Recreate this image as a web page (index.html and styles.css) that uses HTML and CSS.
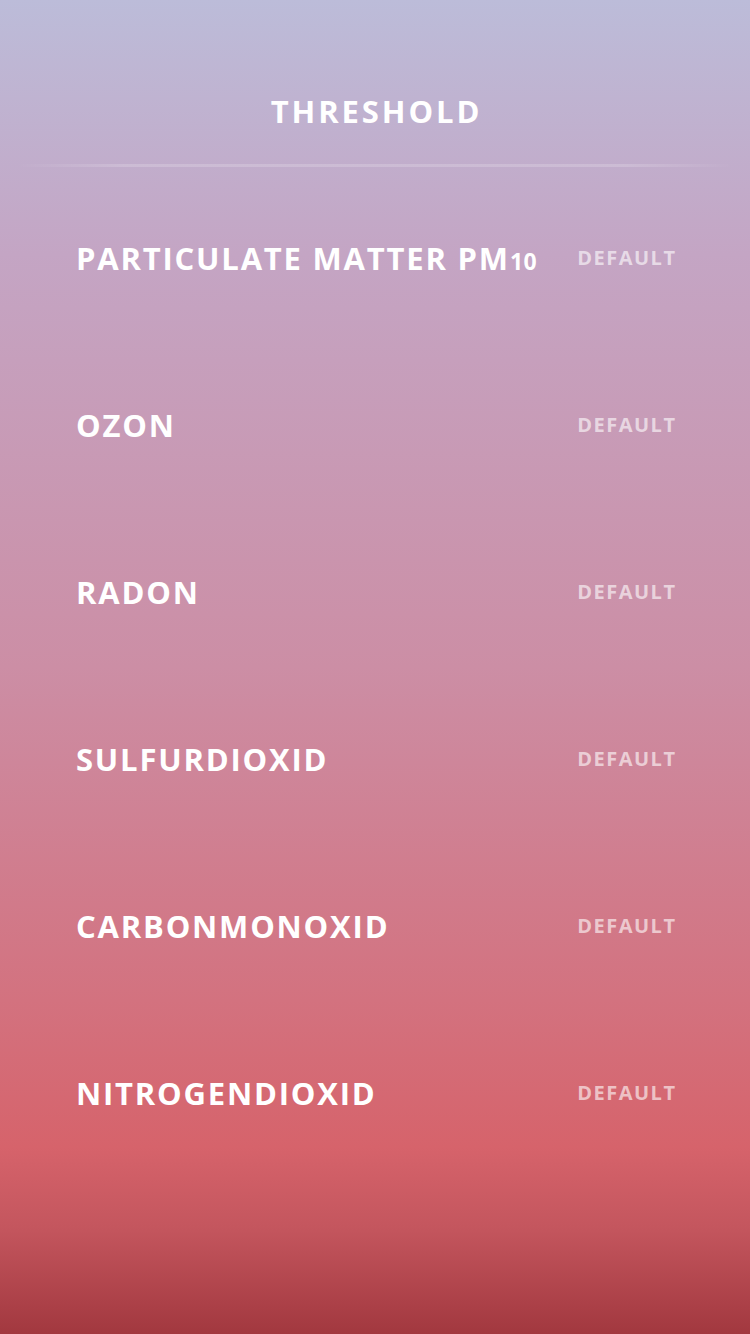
FILE: index.html
```html
<!DOCTYPE html>
<html>
<head>
<meta charset="utf-8">
<link rel="stylesheet" href="styles.css">
</head>
<body>
<div class="screen">
  <header class="header">
    <h1 class="title">THRESHOLD</h1>
  </header>
  <div class="divider"></div>
  <ul class="list">
    <li class="row"><span class="name">PARTICULATE MATTER PM<span class="sub">10</span></span><span class="value">DEFAULT</span></li>
    <li class="row"><span class="name">OZON</span><span class="value">DEFAULT</span></li>
    <li class="row"><span class="name">RADON</span><span class="value">DEFAULT</span></li>
    <li class="row"><span class="name">SULFURDIOXID</span><span class="value">DEFAULT</span></li>
    <li class="row"><span class="name">CARBONMONOXID</span><span class="value">DEFAULT</span></li>
    <li class="row"><span class="name">NITROGENDIOXID</span><span class="value">DEFAULT</span></li>
  </ul>
</div>
</body>
</html>
```
FILE: styles.css
```css
html, body {
  margin: 0;
  padding: 0;
}
body {
  width: 750px;
  height: 1334px;
  overflow: hidden;
  font-family: "Open Sans", "Liberation Sans", sans-serif;
  color: #fff;
}
.screen {
  height: 1334px;
  background: linear-gradient(to bottom, #bcbcd9 0%, #c4a5c4 19%, #cc8ea5 50%, #d3727f 75%, #d6636b 86%, #c4565e 92%, #a2383f 100%);
}
.header {
  height: 164px;
  display: flex;
  justify-content: center;
  align-items: flex-start;
}
.title {
  margin: 0 0 0 3px;
  padding-top: 90px;
  font-size: 31px;
  line-height: 42px;
  font-weight: 700;
  letter-spacing: 2.9px;
}
.divider {
  height: 3px;
  margin: 0 16px;
  background: linear-gradient(to right, rgba(255,255,255,0) 0%, rgba(255,255,255,0.18) 15%, rgba(255,255,255,0.18) 85%, rgba(255,255,255,0) 100%);
}
.list {
  list-style: none;
  margin: 0;
  padding: 7px 75px 0 76px;
}
.row {
  height: 167px;
  display: flex;
  align-items: center;
  justify-content: space-between;
}
.name {
  font-size: 31px;
  font-weight: 700;
  letter-spacing: 1.8px;
}
.sub {
  font-size: 23px;
  letter-spacing: 0.5px;
}
.value {
  font-size: 20px;
  font-weight: 700;
  letter-spacing: 1.5px;
  margin-right: -1.5px;
  color: rgba(255,255,255,0.6);
}
```
